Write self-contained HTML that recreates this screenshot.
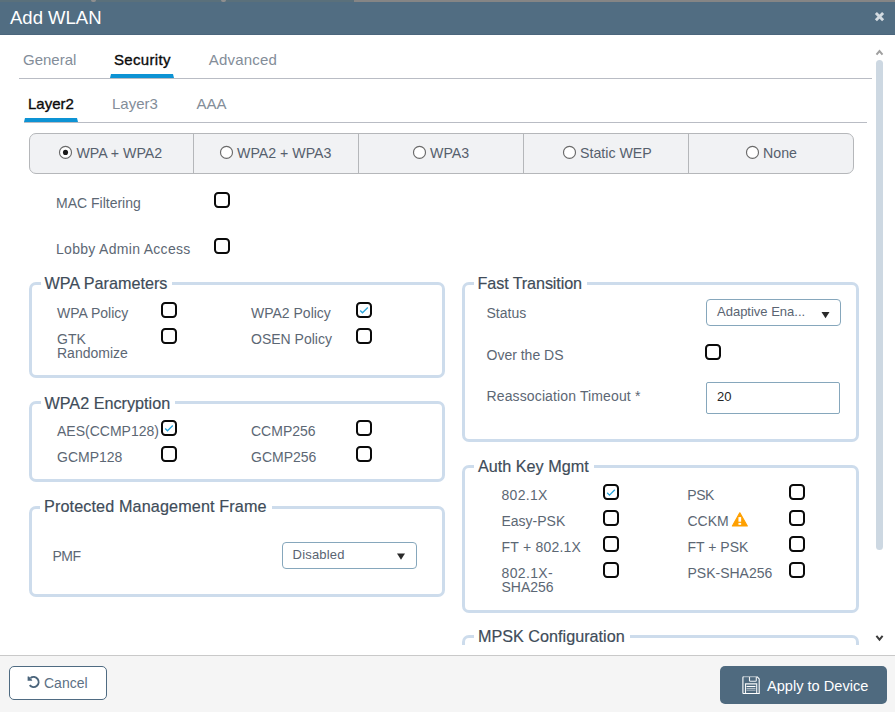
<!DOCTYPE html>
<html><head><meta charset="utf-8">
<style>
*{box-sizing:border-box;margin:0;padding:0}
html,body{width:895px;height:712px;overflow:hidden;background:#fff}
body{font-family:"Liberation Sans",sans-serif;position:relative;color:#5c6774;font-size:14px}
.abs{position:absolute}
.t{position:absolute;white-space:nowrap;line-height:1}
#strip1{left:0;top:0;width:354px;height:2px;background:#5a707b}
#strip2{left:354px;top:0;width:541px;height:2px;background:#858585}
.notch{position:absolute;top:0;width:5px;height:2px;background:#8f8f8f;border-radius:0 0 2px 2px}
#hdr{left:0;top:2px;width:895px;height:33px;background:#516d82;border-bottom:1px solid #4b667c}
#title{left:10px;top:9px;font-size:18.5px;color:#fff}
.tab{font-size:15px;color:#838d99}
.tab.on{color:#0b0b0b;-webkit-text-stroke:0.35px #0b0b0b}
.ul{position:absolute;height:0;border-bottom:4px solid #0d93d4;border-left:1.2px solid transparent;border-right:1.2px solid transparent}
.hl{position:absolute;height:1px;background:#b9bcc4}
#rg{left:29px;top:133px;width:825px;height:41px;border:1px solid #b5b7ba;border-radius:7px;background:#f1f2f4}
.rdiv{position:absolute;top:134px;width:1px;height:39px;background:#b5b7ba}
.rc{position:absolute;width:13px;height:13px;border:1.3px solid #4a4a4a;border-radius:50%;background:#fff}
.rc.on::after{content:"";position:absolute;left:2.2px;top:2.2px;width:6px;height:6px;border-radius:50%;background:#111}
.rl{font-size:14.2px;color:#56606d}
.cb{position:absolute;width:16px;height:16px;border:2px solid #0a0a0a;border-radius:4.2px;background:#fff}
.fs{position:absolute;border:3px solid #cddcec;border-radius:7px}
.lg{position:absolute;background:#fff;font-size:16.2px;color:#404c59;white-space:nowrap;line-height:1;padding:0 5px 0 4px;-webkit-text-stroke:0.18px #404c59}
.sel{position:absolute;border:1px solid #86a7bc;border-radius:4px;background:#fff}
.st{font-size:13px;color:#5a6472}
.arrow{position:absolute;width:0;height:0;border-left:3.9px solid transparent;border-right:3.9px solid transparent;border-top:5.6px solid #111}
#foot{left:0;top:655px;width:895px;height:57px;background:#f5f5f5;border-top:1px solid #c9c9c9}
#cancel{left:9px;top:666px;width:98px;height:34px;border:1px solid #4f6b82;border-radius:5px;background:#fff}
#apply{left:720px;top:666px;width:167px;height:38px;border-radius:5px;background:#4f6a7f}
</style></head><body>
<div class="abs" id="strip1"></div><div class="abs" id="strip2"></div>
<div class="abs" id="hdr"></div>
<div class="notch" style="left:90.5px"></div><div class="notch" style="left:220.5px"></div>
<div class="t" id="title">Add WLAN</div>
<svg class="abs" style="left:874px;top:11px" width="11" height="11" viewBox="0 0 11 11"><g transform="translate(0.5 0.6)"><path d="M1.4 1.4L8.6 8.6M8.6 1.4L1.4 8.6" stroke="#d3dbe1" stroke-width="2.9" stroke-linecap="butt"/></g></svg>

<!-- main tabs -->
<div class="t tab" style="left:23px;top:52px">General</div>
<div class="t tab on" style="left:114px;top:52px;letter-spacing:0.33px">Security</div>
<div class="t tab" style="left:208.7px;top:52px;letter-spacing:0.2px">Advanced</div>
<div class="hl" style="left:19px;top:78px;width:853px"></div>
<div class="ul" style="left:110px;top:74px;width:64px"></div>

<!-- sub tabs -->
<div class="t tab on" style="left:28px;top:96px">Layer2</div>
<div class="t tab" style="left:112px;top:96px">Layer3</div>
<div class="t tab" style="left:196.5px;top:96px">AAA</div>
<div class="hl" style="left:24px;top:122px;width:843px"></div>
<div class="ul" style="left:24px;top:118px;width:54px"></div>

<!-- radio group -->
<div class="abs" id="rg"></div>
<div class="rdiv" style="left:193px"></div>
<div class="rdiv" style="left:358px"></div>
<div class="rdiv" style="left:523px"></div>
<div class="rdiv" style="left:688px"></div>
<svg class="abs" style="left:58px;top:145px" width="15" height="15" viewBox="0 0 15 15"><g transform="translate(0.5 0.4)"><circle cx="7" cy="7" r="6" fill="#fff" stroke="#6a6a6a" stroke-width="1.15"/><circle cx="7" cy="7" r="2.55" fill="#1a1a1a"/></g></svg><div class="t rl" style="left:76.4px;top:146px">WPA + WPA2</div>
<svg class="abs" style="left:219px;top:145px" width="15" height="15" viewBox="0 0 15 15"><g transform="translate(0.5 0.4)"><circle cx="7" cy="7" r="6" fill="#fff" stroke="#6a6a6a" stroke-width="1.15"/></g></svg><div class="t rl" style="left:237px;top:146px">WPA2 + WPA3</div>
<svg class="abs" style="left:412px;top:145px" width="15" height="15" viewBox="0 0 15 15"><g transform="translate(0.5 0.4)"><circle cx="7" cy="7" r="6" fill="#fff" stroke="#6a6a6a" stroke-width="1.15"/></g></svg><div class="t rl" style="left:430px;top:146px">WPA3</div>
<svg class="abs" style="left:562px;top:145px" width="15" height="15" viewBox="0 0 15 15"><g transform="translate(0.5 0.4)"><circle cx="7" cy="7" r="6" fill="#fff" stroke="#6a6a6a" stroke-width="1.15"/></g></svg><div class="t rl" style="left:580px;top:146px">Static WEP</div>
<svg class="abs" style="left:745px;top:145px" width="15" height="15" viewBox="0 0 15 15"><g transform="translate(0.5 0.4)"><circle cx="7" cy="7" r="6" fill="#fff" stroke="#6a6a6a" stroke-width="1.15"/></g></svg><div class="t rl" style="left:763px;top:146px">None</div>

<!-- top checkboxes -->
<div class="t" style="left:56px;top:196px">MAC Filtering</div><div class="cb" style="left:214px;top:192px"></div>
<div class="t" style="left:56px;top:242px;letter-spacing:0.3px">Lobby Admin Access</div><div class="cb" style="left:214px;top:238px"></div>

<!-- WPA Parameters -->
<div class="fs" style="left:29px;top:282px;width:416px;height:96px"></div>
<div class="lg" style="left:40.5px;top:275px">WPA Parameters</div>
<div class="t" style="left:57px;top:306px">WPA Policy</div><div class="cb" style="left:161px;top:302px"></div>
<div class="t" style="left:57px;top:332px">GTK</div><div class="t" style="left:57px;top:346px">Randomize</div><div class="cb" style="left:161px;top:328px"></div>
<div class="t" style="left:251px;top:306px">WPA2 Policy</div><div class="cb" style="left:356px;top:302px"></div>
<div class="t" style="left:251px;top:332px">OSEN Policy</div><div class="cb" style="left:356px;top:328px"></div>

<!-- WPA2 Encryption -->
<div class="fs" style="left:29px;top:401px;width:416px;height:81px"></div>
<div class="lg" style="left:40.5px;top:395px">WPA2 Encryption</div>
<div class="t" style="left:57px;top:424px">AES(CCMP128)</div><div class="cb" style="left:161px;top:420px"></div>
<div class="t" style="left:57px;top:450px">GCMP128</div><div class="cb" style="left:161px;top:446px"></div>
<div class="t" style="left:251px;top:424px">CCMP256</div><div class="cb" style="left:356px;top:420px"></div>
<div class="t" style="left:251px;top:450px">GCMP256</div><div class="cb" style="left:356px;top:446px"></div>

<!-- PMF -->
<div class="fs" style="left:29px;top:506px;width:416px;height:91px"></div>
<div class="lg" style="left:40px;top:498px;letter-spacing:0.12px">Protected Management Frame</div>
<div class="t" style="left:52.5px;top:549px;letter-spacing:-0.5px">PMF</div>
<div class="sel" style="left:282px;top:542px;width:135px;height:27px"></div>
<div class="t st" style="left:292.6px;top:548px;letter-spacing:0.18px">Disabled</div>
<svg class="abs" style="left:397px;top:553px" width="9" height="8" viewBox="0 0 9 8"><g transform="translate(0 0.5)"><path d="M0 0H8L4 6.3Z" fill="#2a2a2a"/></g></svg>

<!-- Fast Transition -->
<div class="fs" style="left:462px;top:282px;width:397px;height:160px"></div>
<div class="lg" style="left:473.6px;top:275px;letter-spacing:-0.12px">Fast Transition</div>
<div class="t" style="left:486.5px;top:306px">Status</div>
<div class="sel" style="left:706px;top:299px;width:135px;height:27px"></div>
<div class="t st" style="left:717px;top:305px">Adaptive Ena...</div>
<svg class="abs" style="left:821px;top:312px" width="9" height="8" viewBox="0 0 9 8"><g transform="translate(0.5 0)"><path d="M0 0H8L4 6.3Z" fill="#2a2a2a"/></g></svg>
<div class="t" style="left:486.5px;top:348px">Over the DS</div><div class="cb" style="left:705px;top:344px"></div>
<div class="t" style="left:486.5px;top:389px;letter-spacing:0.13px">Reassociation Timeout *</div>
<div class="sel" style="left:706px;top:382px;width:134px;height:32px;border-radius:2px"></div>
<div class="t st" style="left:717px;top:390px;color:#252525">20</div>

<!-- Auth Key Mgmt -->
<div class="fs" style="left:462px;top:464.5px;width:397px;height:148px"></div>
<div class="lg" style="left:474px;top:458px">Auth Key Mgmt</div>
<div class="t" style="left:501.5px;top:488px;letter-spacing:0.3px">802.1X</div><div class="cb" style="left:603px;top:484.3px"></div>
<div class="t" style="left:501.5px;top:514px">Easy-PSK</div><div class="cb" style="left:603px;top:510.2px"></div>
<div class="t" style="left:501.5px;top:540px;letter-spacing:0.22px">FT + 802.1X</div><div class="cb" style="left:603px;top:536px"></div>
<div class="t" style="left:501.5px;top:566px;letter-spacing:0.35px">802.1X-</div><div class="t" style="left:501.5px;top:580px">SHA256</div><div class="cb" style="left:603px;top:561.8px"></div>
<div class="t" style="left:687.3px;top:488px;letter-spacing:-0.5px">PSK</div><div class="cb" style="left:789px;top:484.3px"></div>
<div class="t" style="left:687.5px;top:514px">CCKM</div><div class="cb" style="left:789px;top:510.2px"></div>
<div class="t" style="left:687.5px;top:540px">FT + PSK</div><div class="cb" style="left:789px;top:536px"></div>
<div class="t" style="left:687.5px;top:566px">PSK-SHA256</div><div class="cb" style="left:789px;top:561.8px"></div>
<svg class="abs" style="left:731px;top:510px" width="18" height="18" viewBox="0 0 18 18"><g transform="translate(0.5 0.9)"><path d="M8.3 1.9 L15.8 15.1 H0.9 Z" fill="#ffa000" stroke="#ffa000" stroke-width="1.2" stroke-linejoin="round"/><rect x="6.95" y="6.2" width="2.7" height="4.6" fill="#fff"/><rect x="6.95" y="12" width="2.7" height="1.9" fill="#fff"/></g></svg>

<svg class="abs" style="left:356px;top:302px" width="16" height="16" viewBox="0 0 16 16"><path d="M4.2 8.5L6.5 10.8L11.8 5.5" fill="none" stroke="#2aa5dc" stroke-width="1.3"/></svg>
<svg class="abs" style="left:161px;top:420px" width="16" height="16" viewBox="0 0 16 16"><path d="M4.2 8.5L6.5 10.8L11.8 5.5" fill="none" stroke="#2aa5dc" stroke-width="1.3"/></svg>
<svg class="abs" style="left:603px;top:484px" width="17" height="17" viewBox="0 0 17 17"><g transform="translate(0 0.3)"><path d="M4.2 8.5L6.5 10.8L11.8 5.5" fill="none" stroke="#2aa5dc" stroke-width="1.3"/></g></svg>
<!-- MPSK (clipped) -->
<div class="abs" style="left:455px;top:620px;width:410px;height:24.8px;overflow:hidden">
  <div class="fs" style="left:7px;top:15px;width:397px;height:60px"></div>
  <div class="lg" style="left:19px;top:8px">MPSK Configuration</div>
</div>

<!-- scrollbar -->
<div class="abs" style="left:876px;top:60px;width:7px;height:490px;border-radius:3.5px;background:#cdd8e2"></div>
<svg class="abs" style="left:875px;top:48px" width="9" height="8" viewBox="0 0 9 8"><path d="M1.5 6.6L4.5 3L7.5 6.6" fill="none" stroke="#a0a0a0" stroke-width="2"/></svg>
<svg class="abs" style="left:875px;top:634px" width="9" height="8" viewBox="0 0 9 8"><path d="M1.4 1.9L4.5 5.6L7.6 1.9" fill="none" stroke="#3c3c3c" stroke-width="2"/></svg>

<!-- footer -->
<div class="abs" id="foot"></div>
<div class="abs" id="cancel"></div>
<svg class="abs" style="left:22px;top:670px" width="24" height="24" viewBox="0 0 24 24"><path d="M8.52 8.06 A5.0 5.0 0 1 1 7.71 15.15" fill="none" stroke="#4a647b" stroke-width="2.0"/><path d="M5.6 6.4 H6.9 L10.1 10 V10.8 H5.6 Z" fill="#4a647b"/></svg>
<div class="t" style="left:44px;top:675.5px;color:#5c7084">Cancel</div>
<div class="abs" id="apply"></div>
<svg class="abs" style="left:736px;top:670px" width="30" height="30" viewBox="0 0 30 30" fill="none" stroke="#fff" stroke-width="1.1"><path d="M6.9 23.5 V7.6 Q6.9 6.7 7.8 6.7" /><path d="M7.8 6.7 H21" stroke-opacity="0.55"/><path d="M21 6.7 L23.2 8.9 V23.5 H6.9" /><path d="M13.5 6.9 V10.4 Q13.5 11.3 14.4 11.3 H19.4 Q20.3 11.3 20.3 10.4 V6.9" stroke-opacity="0.9"/><path d="M9.5 23.5 V13.9 H20.7 V23.5" stroke-opacity="0.95"/><path d="M10.5 16.5 H19.5" /><path d="M10.5 18.6 H19.5" stroke-opacity="0.6"/><path d="M10.5 20.3 H19.5" stroke-opacity="0.45"/></svg>
<div class="t" style="left:767px;top:678.5px;font-size:14.6px;color:#fff">Apply to Device</div>
</body></html>
